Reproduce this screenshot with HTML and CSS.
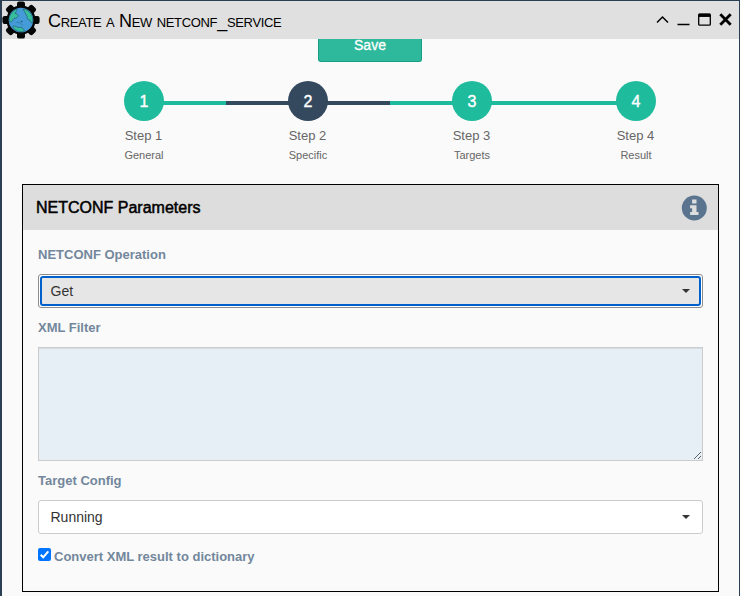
FILE: index.html
```html
<!DOCTYPE html>
<html lang="en">
<head>
<meta charset="utf-8">
<title>Create a New netconf_service</title>
<link rel="stylesheet" href="styles.css">
</head>
<body>
<div class="window">
  <header class="titlebar">
    <svg class="logo" width="38" height="38" viewBox="0 0 38 38">
      <g fill="#050606">
        <circle cx="19" cy="19" r="14.600"/>
        <rect x="15" y="0.400" width="8" height="37.200" rx="2.200"/>
        <rect x="0.400" y="15" width="37.200" height="8" rx="2.200"/>
        <rect x="15" y="0.400" width="8" height="37.200" rx="2.200" transform="rotate(45 19 19)"/>
        <rect x="15" y="0.400" width="8" height="37.200" rx="2.200" transform="rotate(-45 19 19)"/>
      </g>
      <circle cx="19" cy="19" r="12.300" fill="#459bd8"/>
      <g fill="#36bd9b" stroke="#20516b" stroke-width=".6">
        <path d="M8 14.500C9.500 11.300 11.700 9 14.800 8C15.500 9.800 13.800 11 12.900 12.300C14.800 12.600 16.500 13.600 16 15.300C15 17.600 11.800 16.600 11 18.800C10.500 20.800 8.800 21.200 7.300 20.600C6.900 18.500 7.100 16.400 8 14.500Z"/>
        <path d="M20.800 8C24.500 8 28.500 11 30.200 15.200C31 18 30.900 20 30.200 22.200C28.800 21.800 28.300 20 27.600 18.800C25.800 18.700 24.300 17.200 25.300 15.300C23.500 13.800 23.300 11 20.800 8Z"/>
        <path d="M10.500 25.800C12 23.500 14.500 26.200 16.600 26.400C19.500 26 21.800 27.300 22.500 30.200C18.500 31.600 13.500 30.300 10.500 25.800Z"/>
      </g>
      <path d="M14.500 21.500C17 20.700 19.500 22.500 20.500 24.500" fill="none" stroke="#2b7195" stroke-width=".7"/>
      <circle cx="19.700" cy="20.500" r=".8" fill="#20516b"/>
    </svg>
    <h1 class="title">Create a New netconf_service</h1>
    <svg class="controls" width="80" height="20" viewBox="0 0 80 20" fill="none" stroke="#000">
      <path d="M2 12.500L7.500 7L13 12.500" stroke-width="1.500"/>
      <path d="M22.500 14.500H34.500" stroke-width="1.500"/>
      <rect x="43.700" y="4.200" width="11.600" height="11" rx="1" stroke-width="1.300"/>
      <path d="M43.500 5.300H55.500" stroke-width="3.300"/>
      <path d="M65.300 4.300L75.700 14.700M75.700 4.300L65.300 14.700" stroke-width="2.800"/>
    </svg>
  </header>
  <main class="content">
    <div class="toolbar"><button class="save">Save</button></div>
    <ol class="steps">
      <li class="step first"><span class="dot">1</span><span class="name">Step 1</span><small>General</small></li>
      <li class="step active"><span class="dot">2</span><span class="name">Step 2</span><small>Specific</small></li>
      <li class="step"><span class="dot">3</span><span class="name">Step 3</span><small>Targets</small></li>
      <li class="step last"><span class="dot">4</span><span class="name">Step 4</span><small>Result</small></li>
    </ol>
    <section class="panel">
      <div class="panel-head">
        <h2>NETCONF Parameters</h2>
        <svg width="26" height="26" viewBox="0 0 26 26">
          <circle cx="13.300" cy="13" r="12.500" fill="#5a738e"/>
          <path fill="#ddd" d="M11.100 4.600H15.500V8.600H11.100ZM9.100 10.200H15.500V17H17.500V20H9.100V17H11.100V13.200H9.100Z"/>
        </svg>
      </div>
      <form class="fields">
        <label class="label">NETCONF Operation</label>
        <div class="select focused"><span>Get</span><i class="caret"></i></div>
        <label class="label filter-label">XML Filter</label>
        <textarea class="filter"></textarea>
        <label class="label target-label">Target Config</label>
        <div class="select running"><span>Running</span><i class="caret"></i></div>
        <label class="check">
          <svg width="13" height="13" viewBox="0 0 13 13"><rect width="13" height="13" rx="2" fill="#0075ff"/><path d="M2.700 6.800L5.200 9.300L10.300 3.300" fill="none" stroke="#fff" stroke-width="2"/></svg>
          <span>Convert XML result to dictionary</span>
        </label>
      </form>
    </section>
  </main>
</div>
</body>
</html>
```
FILE: styles.css
```css
* { box-sizing: border-box; }
body {
  margin: 0;
  height: 596px;
  overflow: hidden;
  background: #2a3f54;
  font: 13px/18px "Liberation Sans", Arial, sans-serif;
  color: #73879c;
}
.window {
  height: 596px;
  padding: 1px 1px 0 2px;
}
.titlebar {
  display: flex;
  align-items: center;
  height: 38px;
  background: #e0e0e0;
}
.title {
  margin: 2px 0 0 8px;
  font-size: 18px;
  font-weight: 400;
  line-height: 24px;
  letter-spacing: -.33px;
  font-variant: small-caps;
  color: #000;
  white-space: nowrap;
}
.controls { margin: 0 4px 0 auto; }
.content {
  height: 557px;
  padding: 0 20px;
  background: #fafafa;
}
.toolbar {
  display: flex;
  justify-content: center;
  height: 23px;
}
.save {
  width: 104px;
  height: 23px;
  margin: 0 0 0 -1px;
  padding: 0 0 9px;
  border: 1px solid #169f85;
  border-top: 0;
  border-radius: 0 0 3px 3px;
  background: #2fb99c;
  color: #fff;
  font: 14px/13px "Liberation Sans", Arial, sans-serif;
  -webkit-text-stroke: .3px #fff;
}
.steps {
  display: flex;
  width: 656px;
  height: 122px;
  margin: 0 0 0 40px;
  padding: 19px 0 0;
  list-style: none;
}
.step {
  display: flex;
  flex-direction: column;
  align-items: center;
  flex: none;
  width: 164px;
  height: 90px;
  color: #666;
  background: linear-gradient(#1fbb9d, #1fbb9d) 0 20px / 100% 4px no-repeat;
}
.step.first { background-position: right 20px; background-size: 50% 4px; }
.step.last { background-size: 50% 4px; }
.step.active { background-image: linear-gradient(#34495e, #34495e); }
.dot {
  width: 40px;
  height: 40px;
  border-radius: 50%;
  background: #1fbb9d;
  color: #fff;
  font-size: 16px;
  line-height: 42px;
  text-align: center;
  -webkit-text-stroke: .4px #fff;
}
.active .dot { background: #34495e; }
.name { margin: 6px 1px 0 0; }
.step small {
  margin-top: 1px;
  font-size: 11px;
}
.panel {
  width: 697px;
  height: 408px;
  border: 1px solid #000;
}
.panel-head {
  display: flex;
  align-items: center;
  justify-content: space-between;
  height: 45px;
  padding: 0 11px 0 13px;
  background: #ddd;
}
.panel-head h2 {
  margin: 0;
  font-size: 16px;
  font-weight: 400;
  line-height: 20px;
  color: #000;
  -webkit-text-stroke: .5px #000;
}
.fields {
  display: flex;
  flex-direction: column;
  width: 665px;
  margin: 16px 0 0 15px;
}
.label {
  height: 18px;
  font-weight: 700;
}
.select {
  display: flex;
  align-items: center;
  justify-content: space-between;
  height: 34px;
  margin-top: 10px;
  padding: 0 12px 0 11.5px;
  border: 1px solid #ccc;
  border-radius: 3px;
  background: #fff;
  color: #333;
  font-size: 14px;
}
.focused {
  position: relative;
  border-color: #8c8c8c;
  background: #fff;
}
.focused::before {
  content: "";
  position: absolute;
  inset: 1px;
  border: 2px solid #0060cc;
  border-radius: 3px;
  background: #e6e6e6;
}
.focused > * { position: relative; }
.caret {
  border: 4px solid transparent;
  border-top-color: #333;
  border-bottom: 0;
}
.filter-label { margin-top: 11px; }
.filter {
  display: block;
  width: 665px;
  height: 114px;
  margin: 10px 0 0;
  border: 1px solid #ccc;
  border-radius: 0;
  background: #e6eef6;
  box-shadow: inset 0 1px 1px rgba(0, 0, 0, .075);
  resize: vertical;
}
.target-label { margin-top: 11px; }
.check {
  display: flex;
  height: 18px;
  margin-top: 14px;
  font-weight: 700;
}
.check span { margin: 0 0 0 3px; }
```
